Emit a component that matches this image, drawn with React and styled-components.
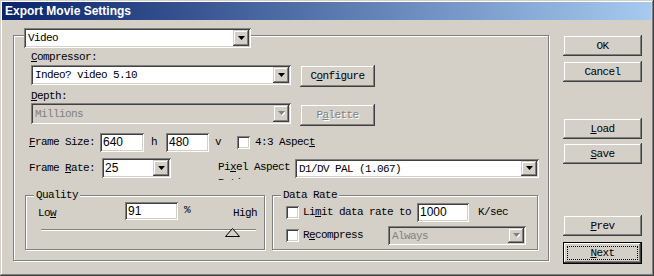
import React from "react";
import styled, { createGlobalStyle } from "styled-components";

const Global = createGlobalStyle`
  html, body { margin: 0; padding: 0; background: #d4d0c8; }
  body {
    font-family: "Liberation Mono", "DejaVu Sans Mono", monospace;
    font-size: 11px;
    letter-spacing: -0.6px;
    color: #000;
  }
  u { text-underline-offset: 1px; }
`;

const raised = `
  box-shadow: inset -1px -1px 0 #404040, inset 1px 1px 0 #d4d0c8,
    inset -2px -2px 0 #808080, inset 2px 2px 0 #fff;
`;
const sunken = `
  box-shadow: inset 1px 1px 0 #808080, inset -1px -1px 0 #fff,
    inset 2px 2px 0 #404040, inset -2px -2px 0 #d4d0c8;
`;
const etched = `
  border: 1px solid #808080;
  box-shadow: inset 1px 1px 0 #fff, 1px 1px 0 #fff;
`;

const Window = styled.div`
  width: 654px;
  height: 276px;
  box-sizing: border-box;
  padding: 2px 3px 3px 2px;
  background: #d4d0c8;
  overflow: hidden;
  box-shadow: inset -1px -1px 0 #404040, inset 1px 1px 0 #d4d0c8,
    inset -2px -2px 0 #808080, inset 2px 2px 0 #fff;
`;

const TitleBar = styled.div`
  height: 18px;
  line-height: 18px;
  padding-left: 3px;
  background: linear-gradient(to right, #0a246a, #a6caf0);
  color: #fff;
  font-family: "Liberation Sans", Arial, sans-serif;
  font-weight: bold;
  font-size: 12px;
  letter-spacing: 0;
`;

const Body = styled.div`
  display: flex;
  padding: 8px 0 0 11px;
`;

const MainGroup = styled.div`
  width: 536px;
  height: 226px;
  box-sizing: border-box;
  margin-top: 7px;
  ${etched}
`;

const SubGroup = styled.div`
  width: ${(p) => p.$w}px;
  height: 55px;
  box-sizing: border-box;
  margin-left: ${(p) => p.$ml || 0}px;
  ${etched}
`;

const Legend = styled.div`
  width: fit-content;
  margin: -7px 0 0 8px;
  padding: 0 2px;
  line-height: 13px;
  background: #d4d0c8;
`;

const HeaderSlot = styled.div`
  margin: -8px 0 0 10px;
`;

const Label = styled.div`
  margin: ${(p) => p.$mt || 0}px 0 0 ${(p) => p.$ml || 0}px;
  width: ${(p) => (p.$w ? `${p.$w}px` : "auto")};
  flex-shrink: 0;
  line-height: 13px;
  white-space: nowrap;
`;

const Row = styled.div`
  display: flex;
  align-items: ${(p) => p.$align || "center"};
  height: ${(p) => p.$h}px;
  margin: ${(p) => p.$mt || 0}px 0 0 ${(p) => p.$ml || 0}px;
`;

const WrapLabel = styled.div`
  width: ${(p) => p.$w}px;
  height: 22px;
  margin-left: ${(p) => p.$ml}px;
  padding-top: 1px;
  box-sizing: border-box;
  line-height: 16px;
  overflow: hidden;
  flex-shrink: 0;
`;

const FieldBox = styled.div`
  width: ${(p) => p.$w}px;
  height: ${(p) => p.$h || 20}px;
  margin-top: ${(p) => p.$mt || 0}px;
  flex-shrink: 0;
  box-sizing: border-box;
  display: flex;
  padding: 2px;
  background: ${(p) => (p.$disabled ? "#d4d0c8" : "#fff")};
  ${sunken}
`;

const FieldValue = styled.div`
  flex: 1;
  display: flex;
  align-items: center;
  padding-left: ${(p) => (p.$sans ? 1 : 2)}px;
  color: ${(p) => (p.$disabled ? "#808080" : "#000")};
  white-space: nowrap;
  overflow: hidden;
  ${(p) =>
    p.$sans &&
    `font-family: "Liberation Sans", Arial, sans-serif; font-size: 12px; letter-spacing: 0;`}
`;

const ArrowButton = styled.div`
  width: 16px;
  display: flex;
  align-items: center;
  justify-content: center;
  background: #d4d0c8;
  ${raised}
`;

const NumberBox = styled.div`
  width: ${(p) => p.$w}px;
  height: ${(p) => p.$h || 19}px;
  flex-shrink: 0;
  box-sizing: border-box;
  padding: 2px 0 0 3px;
  background: #fff;
  font-family: "Liberation Sans", Arial, sans-serif;
  font-size: 12px;
  letter-spacing: 0;
  line-height: 15px;
  ${sunken}
`;

const Unit = styled.div`
  width: ${(p) => p.$w}px;
  padding-left: ${(p) => p.$pl || 0}px;
  margin-top: ${(p) => p.$mt || 0}px;
  align-self: ${(p) => (p.$mt ? "flex-start" : "center")};
  box-sizing: border-box;
  flex-shrink: 0;
  line-height: 13px;
  white-space: nowrap;
`;

const CheckBox = styled.div`
  width: 13px;
  height: 13px;
  flex-shrink: 0;
  background: #fff;
  ${sunken}
`;

const CheckText = styled.div`
  margin-left: ${(p) => p.$ml || 4}px;
  width: ${(p) => (p.$w ? `${p.$w}px` : "auto")};
  flex-shrink: 0;
  line-height: 13px;
  white-space: nowrap;
`;

const Button = styled.button`
  position: relative;
  display: block;
  width: ${(p) => p.$w || 79}px;
  height: ${(p) => p.$h || 21}px;
  margin: ${(p) => p.$mt || 0}px 0 0 ${(p) => p.$ml || 0}px;
  padding: 0;
  border: 0;
  flex-shrink: 0;
  background: #d4d0c8;
  font: inherit;
  letter-spacing: inherit;
  color: ${(p) => (p.disabled ? "#808080" : "#000")};
  text-shadow: ${(p) => (p.disabled ? "1px 1px 0 #fff" : "none")};
  ${(p) =>
    p.$default
      ? `box-shadow: inset 0 0 0 1px #000, inset -2px -2px 0 #404040, inset 2px 2px 0 #fff,
          inset -3px -3px 0 #808080;
         &::after {
           content: "";
           position: absolute;
           inset: 4px;
           border: 1px dotted #000;
         }`
      : raised}
`;

const ButtonColumn = styled.div`
  margin: 7px 0 0 14px;
  display: flex;
  flex-direction: column;
`;

const QualityRow = styled.div`
  display: flex;
  align-items: flex-start;
  height: 18px;
  margin-left: 12px;
`;

const SliderArea = styled.div`
  position: relative;
  width: 215px;
  height: 14px;
  margin: 3px 0 0 15px;
  padding-top: 6px;
  box-sizing: border-box;
`;

const Track = styled.div`
  border-top: 1px solid #808080;
  border-bottom: 1px solid #fff;
`;

const Thumb = styled.svg`
  position: absolute;
  top: 5px;
  width: 16px;
  height: 9px;
`;

const Arrow = ({ disabled }) => (
  <svg width="7" height="5" viewBox="0 0 7 5">
    {disabled && <polygon points="1,1 8,1 4.5,5" fill="#fff" />}
    <polygon points="0,0 7,0 3.5,4" fill={disabled ? "#808080" : "#000"} />
  </svg>
);

const Select = ({ w, h, mt, value, sans, disabled }) => (
  <FieldBox $w={w} $h={h} $mt={mt} $disabled={disabled}>
    <FieldValue $sans={sans} $disabled={disabled}>
      {value}
    </FieldValue>
    <ArrowButton>
      <Arrow disabled={disabled} />
    </ArrowButton>
  </FieldBox>
);

const quality = 91;

export default function App() {
  return (
    <>
      <Global />
      <Window>
        <TitleBar>Export Movie Settings</TitleBar>
        <Body>
          <MainGroup>
            <HeaderSlot>
              <Select w={227} value="Video" />
            </HeaderSlot>

            <Label $mt={3} $ml={17}>
              <u>C</u>ompressor:
            </Label>
            <Row $mt={1} $ml={17} $h={22} $align="flex-start">
              <Select w={260} value="Indeo? video 5.10" />
              <Button $w={75} $h={22} $ml={9}>
                C<u>o</u>nfigure
              </Button>
            </Row>

            <Label $mt={3} $ml={17}>
              <u>D</u>epth:
            </Label>
            <Row $ml={17} $h={23} $align="flex-start">
              <Select w={260} h={21} value="Millions" disabled />
              <Button $w={75} $h={22} $ml={9} $mt={1} disabled>
                P<u>a</u>lette
              </Button>
            </Row>

            <Row $mt={7} $ml={15} $h={19}>
              <Label $w={71}>
                <u>F</u>rame Size:
              </Label>
              <NumberBox $w={44}>640</NumberBox>
              <Unit $w={22} $pl={7}>
                h
              </Unit>
              <NumberBox $w={43}>480</NumberBox>
              <Unit $w={28} $pl={6}>
                v
              </Unit>
              <CheckBox />
              <CheckText $ml={5}>
                4:3 Aspec<u>t</u>
              </CheckText>
            </Row>

            <Row $mt={6} $ml={15} $h={21} $align="flex-start">
              <Label $w={73} $mt={4}>
                Frame <u>R</u>ate:
              </Label>
              <Select w={69} value="25" sans />
              <WrapLabel $w={77} $ml={47}>
                Pi<u>x</u>el Aspect Ratio:
              </WrapLabel>
              <Select w={244} h={19} mt={1} value="D1/DV PAL (1.067)" />
            </Row>

            <Row $mt={16} $ml={11} $h={56} $align="flex-start">
              <SubGroup $w={240}>
                <Legend>Quality</Legend>
                <QualityRow>
                  <Unit $w={87} $mt={5}>
                    Lo<u>w</u>
                  </Unit>
                  <NumberBox $w={53} $h={18}>
                    {quality}
                  </NumberBox>
                  <Unit $w={55} $pl={6} $mt={2}>
                    %
                  </Unit>
                  <Unit $w={40} $mt={5}>
                    High
                  </Unit>
                </QualityRow>
                <SliderArea>
                  <Track />
                  <Thumb
                    viewBox="0 0 16 9"
                    style={{ left: Math.round(quality * 2.02) }}
                  >
                    <polygon
                      points="0.5,8.5 7.5,0.5 14.5,8.5"
                      fill="#d4d0c8"
                      stroke="#000"
                    />
                  </Thumb>
                </SliderArea>
              </SubGroup>

              <SubGroup $w={266} $ml={7}>
                <Legend>Data Rate</Legend>
                <Row $mt={1} $ml={13} $h={19}>
                  <CheckBox />
                  <CheckText $w={114}>
                    Li<u>m</u>it data rate to
                  </CheckText>
                  <NumberBox $w={52}>1000</NumberBox>
                  <CheckText $ml={9}>K/sec</CheckText>
                </Row>
                <Row $mt={4} $ml={13} $h={19}>
                  <CheckBox />
                  <CheckText $w={85}>
                    R<u>e</u>compress
                  </CheckText>
                  <Select w={138} h={19} value="Always" disabled />
                </Row>
              </SubGroup>
            </Row>
          </MainGroup>

          <ButtonColumn>
            <Button>OK</Button>
            <Button $mt={5}>Cancel</Button>
            <Button $mt={36}>
              <u>L</u>oad
            </Button>
            <Button $mt={4}>
              <u>S</u>ave
            </Button>
            <Button $mt={51}>
              <u>P</u>rev
            </Button>
            <Button $mt={6} $h={22} $default>
              <u>N</u>ext
            </Button>
          </ButtonColumn>
        </Body>
      </Window>
    </>
  );
}
